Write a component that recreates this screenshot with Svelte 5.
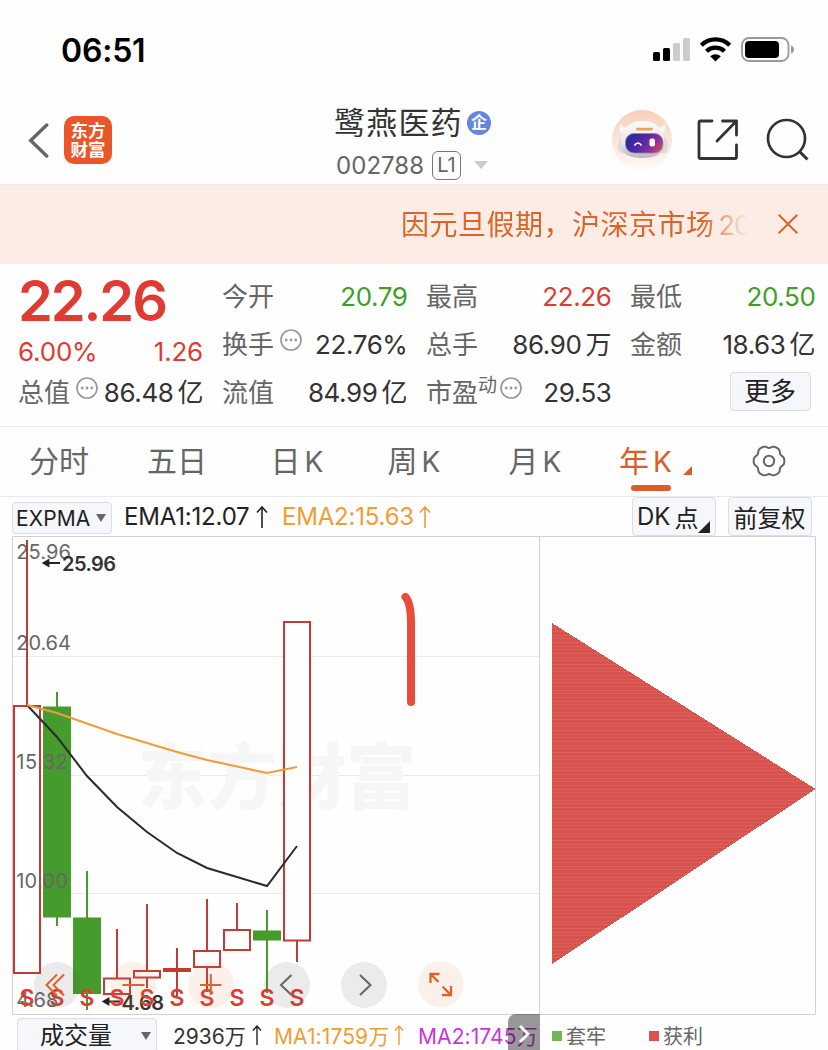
<script>
  const quotes = [
    { label: '今开', value: '20.79', tone: 'green' },
    { label: '最高', value: '22.26', tone: 'red' },
    { label: '最低', value: '20.50', tone: 'green' },
    { label: '换手', value: '22.76%', info: true },
    { label: '总手', value: '86.90', unit: '万' },
    { label: '金额', value: '18.63', unit: '亿' },
    { label: '流值', value: '84.99', unit: '亿' },
    { label: '市盈', value: '29.53', sup: '动', info: true }
  ];

  const tabs = [
    { zh: '分时', x: 118 },
    { zh: '五日', x: 118 },
    { zh: '日', k: true, x: 122 },
    { zh: '周', k: true, x: 112 },
    { zh: '月', k: true, x: 130 },
    { zh: '年', k: true, x: 110, active: true }
  ];

  // x: centre, t/b: body top and bottom, hi/lo: wick ends
  const candles = [
    { x: 27, t: 706, b: 973, hi: 540, lo: 973, up: true },
    { x: 57, t: 706.5, b: 917.5, hi: 692, lo: 926 },
    { x: 87, t: 917.5, b: 994, hi: 871, lo: 1010 },
    { x: 117, t: 978.5, b: 994, hi: 929, lo: 994, up: true },
    { x: 147, t: 971, b: 977.5, hi: 904, lo: 988, up: true },
    { x: 177, t: 969, b: 971, hi: 948, lo: 996, up: true },
    { x: 207, t: 951, b: 967, hi: 899, lo: 992, up: true },
    { x: 237, t: 930, b: 950, hi: 903, lo: 950, up: true },
    { x: 267, t: 930.5, b: 940.5, hi: 910, lo: 993 },
    { x: 297, t: 622, b: 940.5, hi: 622, lo: 962, up: true }
  ];
  const axis = [
    { v: '25.96', y: 559, w: 54.5 },
    { v: '20.64', y: 650, w: 54.5 },
    { v: '15.32', y: 769, w: 51.5 },
    { v: '10.00', y: 888, w: 51.5 },
    { v: '4.68', y: 1006.5, w: 42 }
  ];
  const ema1 = '27,705 57,737 87,776 117,807 147,832 177,853 207,868 237,877 267,886 297,846';
  const ema2 = '27,705 57,713 87,723.5 117,734 147,743 177,752 207,760 237,766.5 267,773 297,767';

  // six-lobed outline of the settings gear
  const gear = Array.from({ length: 72 }, (_, i) => {
    const a = (i * Math.PI) / 36;
    const r = 14.5 + 1.1 * Math.cos(6 * a) - 0.3 * Math.cos(12 * a);
    return `${(r * Math.cos(a)).toFixed(2)},${(r * Math.sin(a)).toFixed(2)}`;
  }).join(' ');
</script>

{#snippet info()}
  <svg class="info" width="22" height="22" viewBox="0 0 22 22">
    <circle cx="11" cy="11" r="10" fill="none" stroke="#999" stroke-width="1.7" />
    <g fill="#999"><circle cx="6.200" cy="11" r="1.4" /><circle cx="11" cy="11" r="1.4" /><circle cx="15.800" cy="11" r="1.4" /></g>
  </svg>
{/snippet}

<main>
  <div class="status">
    <span class="clock">06:51</span>
    <svg width="142" height="28" viewBox="652 36 142 28">
      <rect x="653" y="52" width="7" height="9" rx="1.5" />
      <rect x="663" y="48" width="7" height="13" rx="1.5" />
      <rect x="673" y="43" width="7" height="18" rx="1.5" fill="#ccc" />
      <rect x="683" y="38" width="7" height="23" rx="1.5" fill="#ccc" />
      <g fill="none" stroke="#000" stroke-width="4.3">
        <path d="M701.3 45.2a20.3 20.3 0 0 1 28.4 0" />
        <path d="M706.5 51.3a13 13 0 0 1 18 0" />
      </g>
      <path d="M710.2 56.2a8 8 0 0 1 10.6 0L715.5 61.4z" />
      <rect x="742" y="38" width="46.5" height="23" rx="7" fill="none" stroke="#999" stroke-width="1.8" />
      <rect x="745" y="41" width="34" height="17" rx="4" />
      <path d="M791 45.5q3 1 3 4t-3 4z" fill="#999" />
    </svg>
  </div>

  <header>
    <svg class="back" width="24" height="40" viewBox="0 0 24 40"><path d="M21.700 5 5.700 20.500 21.700 36" fill="none" stroke="#666" stroke-width="3.4" stroke-linecap="round" /></svg>
    <div class="brand"><span>东方</span><span>财富</span></div>
    <div class="title">
      <div class="name"><span>鹭燕医药</span><b>企</b></div>
      <div class="code"><span>002788</span><i>L1</i><svg width="14" height="8" viewBox="0 0 14 8"><path d="M0 0h14L7 8z" fill="#ccc" /></svg></div>
    </div>
    <svg class="robot" width="60" height="60" viewBox="0 0 60 60">
      <defs>
        <linearGradient id="halo" x2="0" y2="1"><stop offset="0" stop-color="#f8cfb8" /><stop offset="1" stop-color="#fffaf7" /></linearGradient>
        <linearGradient id="visor" x1="0" y1=".3" x2="1" y2=".7"><stop offset="0" stop-color="#2f2798" /><stop offset=".45" stop-color="#5428a6" /><stop offset=".75" stop-color="#8c3198" /><stop offset="1" stop-color="#d94860" /></linearGradient>
        <linearGradient id="shell" x2="0" y2="1"><stop offset="0" stop-color="#fcfafa" /><stop offset=".6" stop-color="#e9e6ea" /><stop offset="1" stop-color="#b9b6bf" /></linearGradient>
      </defs>
      <circle cx="30" cy="30" r="30" fill="url(#halo)" />
      <ellipse cx="10.500" cy="35.500" rx="4.500" ry="8" fill="#dedbe0" /><ellipse cx="52" cy="35.500" rx="4" ry="8" fill="#dedbe0" />
      <path d="M14 26Q5 23 8.500 13.500q2 5.500 10 4zM47 26q9-3 5.500-12-2 5-10 4z" fill="#faf6f5" />
      <path d="M9 36C8 19 17 11 31 11s23 9 21 25c0 8-9 12-21.500 12S9 44 9 36z" fill="url(#shell)" />
      <rect x="13.500" y="23.500" width="37.500" height="19.500" rx="8.500" fill="url(#visor)" stroke="#8d86ac" stroke-width=".8" />
      <rect x="24" y="17.700" width="17" height="2.800" rx="1.400" fill="#e7a365" />
      <path d="M22.500 35.500q3.500-5 7 0" fill="none" stroke="#fff" stroke-width="1.700" />
      <rect x="37.500" y="28.500" width="5.500" height="8" rx="2" fill="#fff" />
    </svg>
    <svg class="share" width="42" height="42" viewBox="0 0 42 42" fill="none" stroke="#333" stroke-width="2.800" stroke-linecap="round" stroke-linejoin="round">
      <path d="M15 2H3.500Q2 2 2 3.500V38q0 1.500 1.500 1.500H38q1.500 0 1.500-1.500V26M25.500 2h14v14M39.500 2 20 22" />
    </svg>
    <svg class="search" width="44" height="44" viewBox="0 0 44 44" fill="none" stroke="#333" stroke-width="2.700"><circle cx="20.500" cy="20.500" r="18.500" /><path d="m33 33 8.500 8.500" stroke-width="3" /></svg>
  </header>

  <div class="notice">
    <p>因元旦假期，沪深京市场<span>20</span></p>
    <svg width="20" height="20" viewBox="0 0 20 20"><path d="m.7.700 18.600 18.600M19.300.700.700 19.300" stroke="#dc6428" stroke-width="2" /></svg>
  </div>

  <section class="quote">
    <div class="price">
      <strong>22.26</strong>
      <div class="pair"><span>6.00%</span><span>1.26</span></div>
      <div class="cell first"><label>总值</label>{@render info()}<span class="val">86.48<em>亿</em></span></div>
    </div>
    <div class="grid">
      {#each quotes as q}
        <div class="cell">
          <label>{q.label}</label>{#if q.sup}<sup>{q.sup}</sup>{/if}{#if q.info}{@render info()}{/if}
          <span class="val {q.tone ?? ''}">{q.value}{#if q.unit}<em>{q.unit}</em>{/if}</span>
        </div>
      {/each}
      <div class="cell"><button class="more">更多</button></div>
    </div>
  </section>

  <nav>
    {#each tabs as t}
      <div class="tab" class:active={t.active} style="width:{t.x}px">
        <span>{t.zh}{#if t.k}<u>K</u>{/if}</span>
        {#if t.active}<svg width="9" height="9" viewBox="0 0 9 9"><path d="M9 0v9H0z" fill="#dc5e26" /></svg>{/if}
      </div>
    {/each}
    <svg class="gear" width="34" height="32" viewBox="-17 -16 34 32" fill="none" stroke="#666" stroke-width="2">
      <polygon points={gear} stroke-linejoin="round" />
      <circle r="5.200" />
    </svg>
  </nav>

  <div class="indicators">
    <button class="expma"><span>EXPMA</span><svg width="10" height="8" viewBox="0 0 10 8"><path d="M0 0h10L5 8z" fill="#666" /></svg></button>
    <span class="e1">EMA1:12.07</span>
    <svg class="a1" width="12" height="24" viewBox="0 0 12 24"><path d="M6 23V2M1 7.500 6 2l5 5.500" fill="none" stroke="#222" stroke-width="1.600" /></svg>
    <span class="e2">EMA2:15.63</span>
    <svg class="a2" width="12" height="24" viewBox="0 0 12 24"><path d="M6 23V2M1 7.500 6 2l5 5.500" fill="none" stroke="#f09d35" stroke-width="1.600" /></svg>
    <button class="dk">DK<span>点</span><svg width="12" height="12" viewBox="0 0 12 12"><path d="M12 0v12H0z" fill="#222" /></svg></button>
    <button class="adj">前复权</button>
  </div>

  <svg class="chart" width="804" height="479" viewBox="12 536 804 479">
    <defs>
      <pattern id="bars" width="8" height="11" patternUnits="userSpaceOnUse"><rect width="8" height="11" fill="#d8534e" /><path d="M0 .5h8M0 4.500h8M0 8.500h8" stroke="#db5f5a" stroke-width="1" /></pattern>
    </defs>
    <path d="M12 656.500h527M12 775.500h527M12 893.500h527" stroke="#e9e8ee" />
    <text class="mark" x="138" y="803" textLength="278" lengthAdjust="spacingAndGlyphs">东方财富</text>
    {#each candles as c}
      {#if c.up}
        <path d="M{c.x} {c.hi}V{c.t}M{c.x} {c.b}V{c.lo}" stroke="#c23b35" stroke-width="2" />
        <rect x={c.x - 13} y={c.t} width="26" height={c.b - c.t} fill="#fff" stroke="#c23b35" stroke-width="2" />
      {:else}
        <path d="M{c.x} {c.hi}V{c.lo}" stroke="#459b2c" stroke-width="2" />
        <rect x={c.x - 14} y={c.t} width="28" height={c.b - c.t} fill="#459b2c" />
      {/if}
    {/each}
    <polyline points={ema1} fill="none" stroke="#2a2a2a" stroke-width="2" />
    <polyline points={ema2} fill="none" stroke="#f09d35" stroke-width="2" />
    {#each axis as a}
      <text class="axis" x="16.300" y={a.y} textLength={a.w}>{a.v}</text>
    {/each}
    <path d="M44 563h16M43.500 563l5-3v6zM104 1001.500h16M103.500 1001.500l5-3v6z" stroke="#222" stroke-width="1.800" fill="#222" />
    <text class="peak" x="62" y="571" textLength="54">25.96</text>
    <text class="peak" x="121.500" y="1009.500" textLength="42.500">4.68</text>
    {#each candles as c}
      <text class="sell" x={c.x} y="1005.500">S</text>
    {/each}
    <g fill="#505050" fill-opacity=".11"><circle cx="57" cy="985" r="23" /><circle cx="287" cy="985" r="23" /><circle cx="364" cy="985" r="23" /></g>
    <g fill="#e87537" fill-opacity=".1"><circle cx="133.300" cy="985" r="23" /><circle cx="211" cy="985" r="23" /><circle cx="440.700" cy="984.300" r="23" /></g>
    <g fill="none" stroke="#dc6428" stroke-width="2">
      <path d="M57 974.500 46.500 985 57 995.500M64 974.500 53.500 985 64 995.500M122.500 985h22M200 985h21.500M210.800 974v21" />
      <path d="M438.500 982l-7.500-7.500M430.500 983v-9h9M442.500 986.500l8 8M451 986v9h-9" stroke-width="2.300" />
    </g>
    <path d="m291.500 975-10.500 10 10.500 10M360 975l10.500 10-10.500 10" fill="none" stroke="#666" stroke-width="2" />
    <path d="M405.500 597Q411 603 411 624V702" fill="none" stroke="#ea4b3b" stroke-width="8" stroke-linecap="round" stroke-linejoin="round" />
    <path d="M552 623 815.500 789 552 964z" fill="url(#bars)" shape-rendering="crispEdges" />
    <path d="M539.500 536v479M12.500 536.500h803v478h-803z" fill="none" stroke="#d0d0d5" />
  </svg>

  <footer>
    <button class="vol">成交量<svg width="10" height="8" viewBox="0 0 10 8"><path d="M0 0h10L5 8z" fill="#666" /></svg></button>
    <div class="volumes">
      <span class="v0">2936<em>万</em></span>
      <svg width="12" height="22" viewBox="0 0 12 22"><path d="M6 21V2M2 6.500 6 2l4 4.500" fill="none" stroke="#222" stroke-width="1.400" /></svg>
      <span class="v1">MA1:1759<em>万</em></span>
      <svg width="12" height="22" viewBox="0 0 12 22"><path d="M6 21V2M2 6.500 6 2l4 4.500" fill="none" stroke="#f09d35" stroke-width="1.400" /></svg>
      <span class="v2">MA2:1745<em>万</em></span>
      <div class="next"><svg width="12" height="20" viewBox="0 0 12 20"><path d="m2 2 8 8-8 8" fill="none" stroke="#fff" stroke-width="3" /></svg></div>
    </div>
    <div class="legend"><i class="trap"></i><span>套牢</span><i class="gain"></i><span>获利</span></div>
  </footer>
</main>

<style>
  :global(body) { background: #fff; overflow: hidden; }
  main { width: 828px; height: 1050px; overflow: hidden; display: flex; flex-direction: column; background: #fefefe; color: #333; font-family: Inter, 'Noto Sans CJK SC', sans-serif; font-weight: 400; }
  main * { box-sizing: border-box; flex-shrink: 0; white-space: nowrap; }
  main > * { width: 828px; }
  em, i, u { font-style: normal; text-decoration: none; }
  svg { display: block; }
  button { font: inherit; color: #222; background: #f6f7fa; border: 1.500px solid #dcdde4; border-radius: 4px; padding: 0; display: flex; align-items: center; }

  .status { height: 100px; display: flex; justify-content: space-between; padding: 36px 34px 0 61px; }
  .clock { color: #000; font-size: 32px; line-height: 30px; font-weight: 600; letter-spacing: -.2px; }

  header { height: 85px; border-bottom: 1px solid #e9e9ed; display: flex; padding-left: 25px; }
  .back { margin-top: 20px; }
  .brand { width: 48px; height: 48px; margin: 16px 0 0 15px; border-radius: 10px; background: #ec5529; color: #fff; display: flex; flex-direction: column; align-items: center; justify-content: center; font-size: 17.500px; line-height: 19.500px; font-weight: 700; }
  .title { width: 160px; margin: 4px 0 0 222px; }
  .name { display: flex; align-items: center; height: 38px; }
  .name span { font-size: 31px; letter-spacing: 1.200px; color: #333; width: 131px; line-height: 38px; }
  .name b { margin-left: 2px; width: 24px; height: 24px; border-radius: 50%; background: #6486df; color: #fff; font-size: 16px; line-height: 23px; text-align: center; font-weight: 700; }
  .code { display: flex; align-items: center; height: 32px; margin-top: 7px; padding-left: 2px; color: #666; font-size: 24px; }
  .code span { width: 96px; letter-spacing: .05px; }
  .code i { width: 29px; height: 29px; border: 1.500px solid #777; border-radius: 6px; font-size: 20px; line-height: 27px; text-align: center; }
  .code svg { margin-left: 13px; }
  .robot { margin: 10px 0 0 118px; }
  .share { margin: 19px 0 0 25px; }
  .search { margin: 18px 0 0 27px; }

  .notice { height: 79px; background: #fbede5; display: flex; align-items: center; color: #dc6428; }
  .notice p { margin: 1px 0 0 401px; width: 350px; overflow: hidden; font-size: 28px; letter-spacing: .5px; line-height: 42px; mask-image: linear-gradient(90deg, #000 300px, transparent 347px); }
  .notice span { margin-left: 4px; letter-spacing: -1px; font-size: 27px; }
  .notice svg { margin: -1px 0 0 27px; }

  .quote { height: 163px; border-bottom: 1px solid #eaeaec; display: flex; gap: 20px; padding: 9px 0 0 18px; }
  .price { width: 184px; color: #e03b33; }
  .price strong { display: block; height: 56px; line-height: 56px; font-size: 56px; font-weight: 600; letter-spacing: -2.100px; }
  .pair { display: flex; justify-content: space-between; width: 185px; height: 40px; margin-top: 3px; line-height: 40px; font-size: 26px; letter-spacing: -.2px; }
  .grid { display: grid; grid-template-columns: repeat(3, 184px); grid-auto-rows: 48px; gap: 0 20px; }
  .cell { display: flex; align-items: center; height: 48px; position: relative; font-size: 26px; line-height: 48px; width: 185.500px; }
  .cell.first { margin-top: -3px; }
  .cell label { color: #666; font-size: 26px; }
  .cell .info { margin: -10px 0 0 6px; }
  .cell sup { font-size: 19px; line-height: 20px; margin-top: -15px; color: #666; vertical-align: baseline; }
  .cell sup + .info { margin-left: 3px; }
  .cell .val { margin-left: auto; color: #333; letter-spacing: -.4px; }
  .cell em { margin-left: 4px; letter-spacing: 0; font-size: 26px; }
  .cell .red { color: #e03b33; }
  .cell .green { color: #3f9f29; }
  .more { width: 81px; height: 39px; margin: -4px 5px 0 auto; justify-content: center; font-size: 26px; line-height: 38px; padding-top: 1px; }

  nav { height: 70px; border-bottom: 1px solid #eaeaec; display: flex; align-items: center; color: #666; }
  .tab { display: flex; justify-content: center; align-items: center; height: 69px; font-size: 30px; position: relative; padding-bottom: 5px; }
  .tab u { margin-left: 4px; font-size: 28px; }
  .tab.active { color: #dc5e26; padding-left: 1px; }
  .tab.active::after { content: ''; position: absolute; left: 31px; bottom: 5px; width: 40px; height: 6px; border-radius: 3px; background: #dc5e26; }
  .tab svg { margin: 23px 0 0 11px; }
  .gear { margin: -1px 0 0 42px; }

  .indicators { height: 39px; display: flex; align-items: center; padding-left: 12px; font-size: 24px; }
  .expma { width: 100px; height: 32px; margin-top: 2px; padding-left: 3px; font-size: 21px; letter-spacing: .1px; }
  .expma span { width: 79.500px; padding-top: 2px; text-align: left; }
  .e1 { margin-left: 12px; width: 130px; color: #222; letter-spacing: -.2px; }
  .a1 { margin-left: 2px; }
  .e2 { margin-left: 14px; width: 136px; color: #f09d35; letter-spacing: -.2px; }
  .a2 { margin-left: 1px; }
  .dk { width: 84px; height: 39px; margin-left: auto; padding-left: 4px; font-size: 24px; position: relative; }
  .dk span { margin-left: 4px; }
  .dk svg { position: absolute; right: 5px; bottom: 2px; }
  .adj { width: 84px; height: 39px; margin: 0 16px 0 12px; padding-right: 1px; justify-content: center; font-size: 24px; }

  .chart { margin-left: 12px; width: 804px; }
  .mark { font-family: 'Noto Sans CJK SC', sans-serif; font-size: 72px; font-weight: 900; fill: #f6f6f6; }
  .axis { font-size: 20px; fill: #666; }
  .peak { font-size: 20px; font-weight: 600; fill: #333; }
  .sell { font-size: 23px; font-weight: 600; fill: #e03b33; text-anchor: middle; }

  footer { height: 35px; display: flex; font-size: 21px; }
  .vol { width: 140px; height: 35px; margin: 3px 0 0 17px; padding-left: 22px; font-size: 24px; line-height: 32px; }
  .vol svg { margin-left: 29px; }
  .volumes { width: 366px; height: 35px; margin-left: 16px; display: flex; align-items: center; padding-top: 4px; position: relative; }
  .volumes em { font-size: 21px; }
  .v0 { width: 78px; }
  .v1 { width: 119px; margin-left: 11px; color: #f09d35; letter-spacing: .1px; }
  .v2 { margin-left: 13px; color: #cb35dd; letter-spacing: .1px; }
  .next { position: absolute; left: 335px; top: -1px; width: 32px; height: 36px; border-radius: 8px 0 0; background: rgba(0, 0, 0, .4); display: flex; align-items: center; justify-content: center; padding-top: 4px; }
  .legend { display: flex; align-items: center; padding: 6px 0 0 13px; color: #666; font-size: 20px; }
  .legend i { width: 10px; height: 10px; background: #72b457; margin-right: 4px; }
  .legend .gain { background: #d8534e; margin-left: 43px; }
</style>
